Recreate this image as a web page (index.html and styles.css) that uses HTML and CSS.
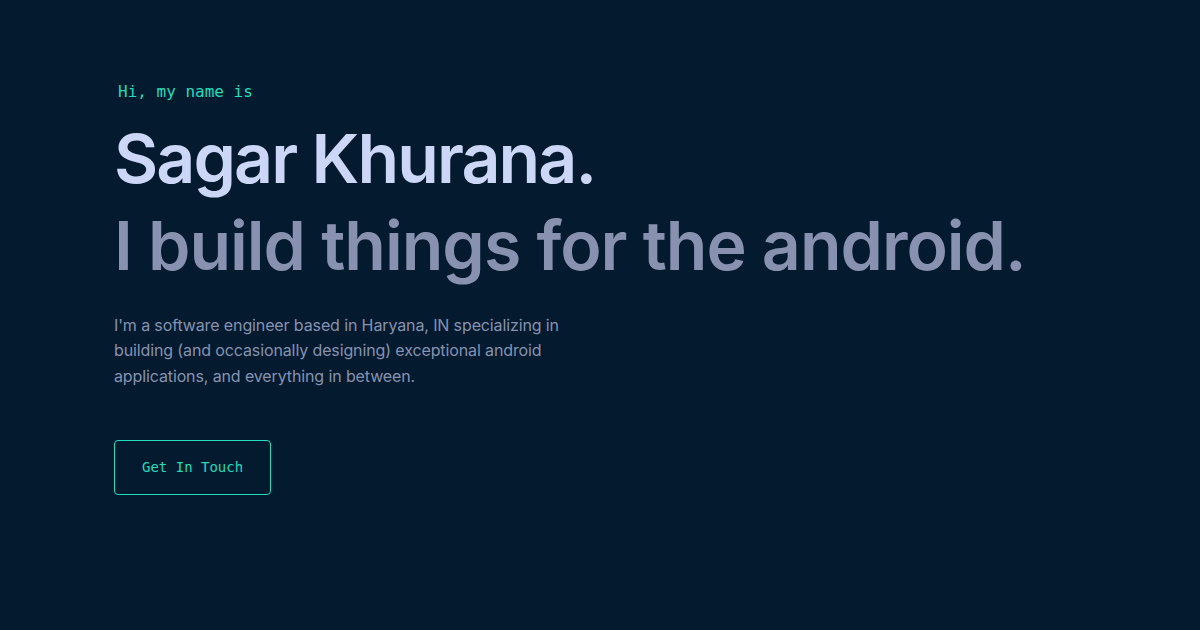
FILE: index.html
```html
<!DOCTYPE html>
<html lang="en">
<head>
<meta charset="utf-8">
<title>Sagar Khurana</title>
<link rel="stylesheet" href="styles.css">
</head>
<body>
<main class="hero">
  <h1 class="hero-intro">Hi, my name is</h1>
  <h2 class="big-heading name">Sagar Khurana.</h2>
  <h3 class="big-heading tagline">I build things for the android.</h3>
  <p class="hero-text">I'm a software engineer based in Haryana, IN specializing in building (and occasionally designing) exceptional android applications, and everything in between.</p>
  <a class="email-link" href="#contact">Get In Touch</a>
</main>
</body>
</html>
```
FILE: styles.css
```css
html, body {
  margin: 0;
  padding: 0;
  background: #031a2f;
  width: 1200px;
  height: 630px;
  overflow: hidden;
}
body {
  font-family: "Inter", "Liberation Sans", sans-serif;
}
.hero {
  display: flex;
  flex-direction: column;
  align-items: flex-start;
  padding: 82px 0 0 114px;
}
.hero-intro {
  margin: 0 0 20px 4px;
  font-family: "DejaVu Sans Mono", "Liberation Mono", monospace;
  font-size: 16px;
  font-weight: 400;
  line-height: 1.2;
  color: #22dcbc;
}
.big-heading {
  margin: 0;
  font-size: 68px;
  font-weight: 600;
  line-height: 1.1;
  letter-spacing: -1px;
}
.name {
  color: #ccd6f6;
  letter-spacing: -1.9px;
}
.tagline {
  margin-top: 12px;
  color: #8892b0;
}
.hero-text {
  margin: 30px 0 0;
  max-width: 470px;
  font-size: 16px;
  line-height: 25.5px;
  letter-spacing: -0.12px;
  color: #8892b0;
}
.email-link {
  margin-top: 51px;
  padding: 18px 27px 19px;
  border: 1px solid #22dcbc;
  border-radius: 4px;
  font-family: "DejaVu Sans Mono", "Liberation Mono", monospace;
  font-size: 14px;
  line-height: 16px;
  color: #22dcbc;
  text-decoration: none;
}
```
